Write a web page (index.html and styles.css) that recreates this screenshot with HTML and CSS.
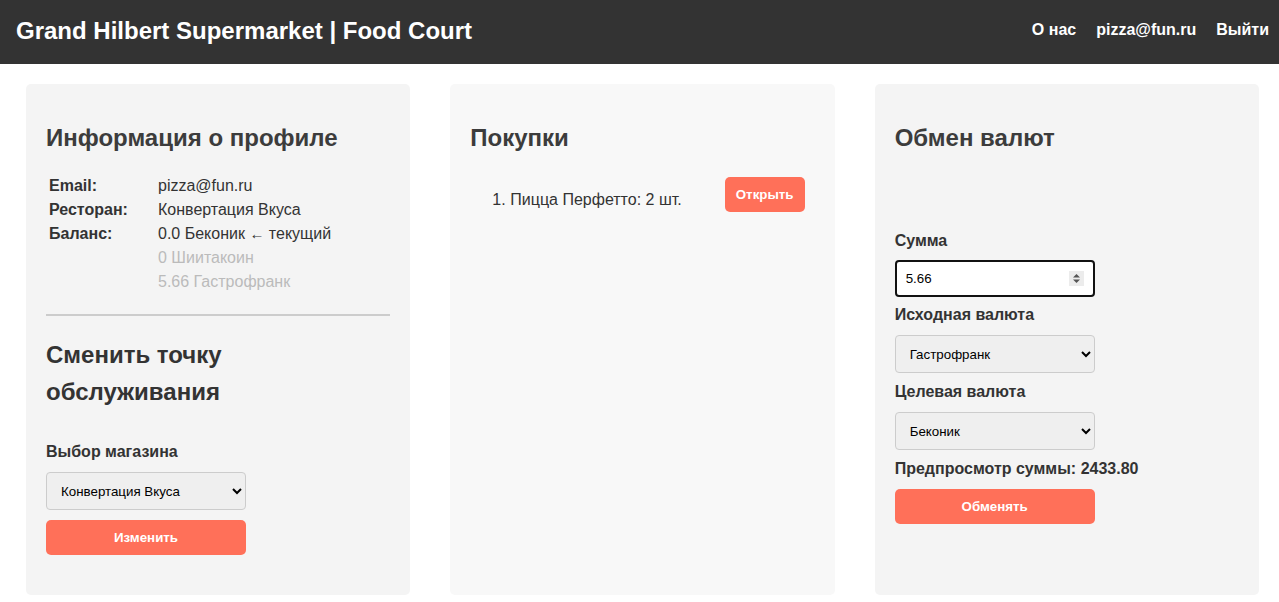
FILE: index.html
```html
<!DOCTYPE html>
<html lang="ru">
<head>
<meta charset="utf-8">
<title>Grand Hilbert Supermarket | Food Court</title>
<link rel="stylesheet" href="styles.css">
</head>
<body>
<header class="topbar">
  <div class="brand">Grand Hilbert Supermarket | Food Court</div>
  <nav class="nav">
    <a href="#">О нас</a>
    <a href="#">pizza@fun.ru</a>
    <a href="#">Выйти</a>
  </nav>
</header>
<main class="columns">
  <section class="card">
    <h2 class="card-title">Информация о профиле</h2>
    <div class="info">
      <div class="info-label">Email:</div><div>pizza@fun.ru</div>
      <div class="info-label">Ресторан:</div><div>Конвертация Вкуса</div>
      <div class="info-label">Баланс:</div>
      <div class="balances">
        <div>0.0 Беконик <span class="arrow">←</span> текущий</div>
        <div class="muted">0 Шиитакоин</div>
        <div class="muted">5.66 Гастрофранк</div>
      </div>
    </div>
    <hr class="divider">
    <h2 class="card-title second">Сменить точку обслуживания</h2>
    <label class="field-label store-label">Выбор магазина</label>
    <select class="select">
      <option>Конвертация Вкуса</option>
    </select>
    <button class="btn btn-wide change-btn">Изменить</button>
  </section>

  <section class="card card-light">
    <h2 class="card-title">Покупки</h2>
    <ol class="orders">
      <li class="order">
        <span class="order-num">1.</span>
        <span class="order-name">Пицца Перфетто: 2 шт.</span>
        <button class="btn btn-open">Открыть</button>
      </li>
    </ol>
  </section>

  <section class="card">
    <h2 class="card-title">Обмен валют</h2>
    <label class="field-label sum-label">Сумма</label>
    <div class="numbox">
      <input class="num-input" type="text" value="5.66">
      <span class="spin">
        <svg width="15" height="15" viewBox="0 0 15 15"><rect width="15" height="15" fill="#ececec"/><path d="M4 6.5 L7.5 3 L11 6.5 Z" fill="#555"/><path d="M4 8.5 L7.5 12 L11 8.5 Z" fill="#555"/></svg>
      </span>
    </div>
    <label class="field-label">Исходная валюта</label>
    <select class="select">
      <option>Гастрофранк</option>
    </select>
    <label class="field-label">Целевая валюта</label>
    <select class="select">
      <option>Беконик</option>
    </select>
    <div class="preview">Предпросмотр суммы: 2433.80</div>
    <button class="btn btn-wide">Обменять</button>
  </section>
</main>
</body>
</html>
```
FILE: styles.css
```css
* { box-sizing: border-box; }
html, body { margin: 0; padding: 0; }
body {
  font-family: "Liberation Sans", Arial, sans-serif;
  font-size: 16px;
  line-height: 24px;
  color: #333;
  background: #fff;
}
.topbar {
  height: 64px;
  background: #333;
  color: #fff;
  display: flex;
  align-items: center;
  justify-content: space-between;
  padding: 0 10px 0 16px;
}
.brand {
  font-size: 24px;
  font-weight: bold;
  line-height: 30px;
  margin-top: -2px;
}
.nav {
  display: flex;
  gap: 20px;
  margin-top: -4px;
}
.nav a {
  color: #fff;
  text-decoration: none;
  font-weight: bold;
  font-size: 16px;
}
.columns {
  display: flex;
  gap: 40px;
  padding: 20px 20px 0 26px;
}
.card {
  flex: 1;
  min-height: 511px;
  background: #f4f4f4;
  border-radius: 5px;
  padding: 20px;
}
.card-light { background: #f8f8f8; }
.card-title {
  font-size: 24px;
  line-height: 37px;
  font-weight: bold;
  color: #3c3c3c;
  margin: 15px 0 0;
}
.card-title.second { color: #333; margin-top: 20px; }
.info {
  display: grid;
  grid-template-columns: 109px 1fr;
  padding-left: 3px;
  margin-top: 18px;
}
.info-label { font-weight: bold; }
.muted { color: #bbb; }
.arrow { font-size: 15px; }
.divider {
  border: none;
  border-top: 2px solid #ccc;
  margin: 20px 0 0;
}
.field-label {
  display: block;
  font-weight: bold;
  margin-bottom: 8px;
}
.store-label { margin-top: 30px; }
.sum-label { margin-top: 73px; margin-bottom: 7px; }
.select {
  display: block;
  width: 200px;
  height: 38px;
  padding: 0 10px;
  font-family: "Liberation Sans", Arial, sans-serif;
  font-size: 13.33px;
  color: #000;
  background-color: #efefef;
  border: 1px solid #ccc;
  border-radius: 4px;
  margin-bottom: 7px;
}
.change-btn { margin-top: 10px; }
.btn {
  background: #ff7059;
  color: #fff;
  border: none;
  border-radius: 5px;
  font-family: "Liberation Sans", Arial, sans-serif;
  font-weight: bold;
  font-size: 13.33px;
  cursor: pointer;
}
.btn-wide {
  display: block;
  width: 200px;
  height: 35px;
}
.orders {
  list-style: none;
  margin: 21px 0 0;
  padding: 0 0 0 22px;
}
.order {
  display: flex;
  align-items: center;
}
.order-num { width: 18px; }
.order-name { flex: 1; }
.btn-open {
  height: 35px;
  width: 80px;
  margin: 0 10px 10px 0;
}
.numbox {
  display: flex;
  align-items: center;
  width: 200px;
  height: 37px;
  border: 2px solid #111;
  border-radius: 4px;
  background: #fff;
  padding: 0 9px 0 9px;
  margin-bottom: 6px;
}
.num-input {
  flex: 1;
  min-width: 0;
  border: none;
  outline: none;
  background: transparent;
  font-family: "Liberation Sans", Arial, sans-serif;
  font-size: 13.33px;
  color: #000;
  padding: 0;
}
.spin { display: flex; }
.preview {
  font-weight: bold;
  margin-bottom: 8px;
}
```
